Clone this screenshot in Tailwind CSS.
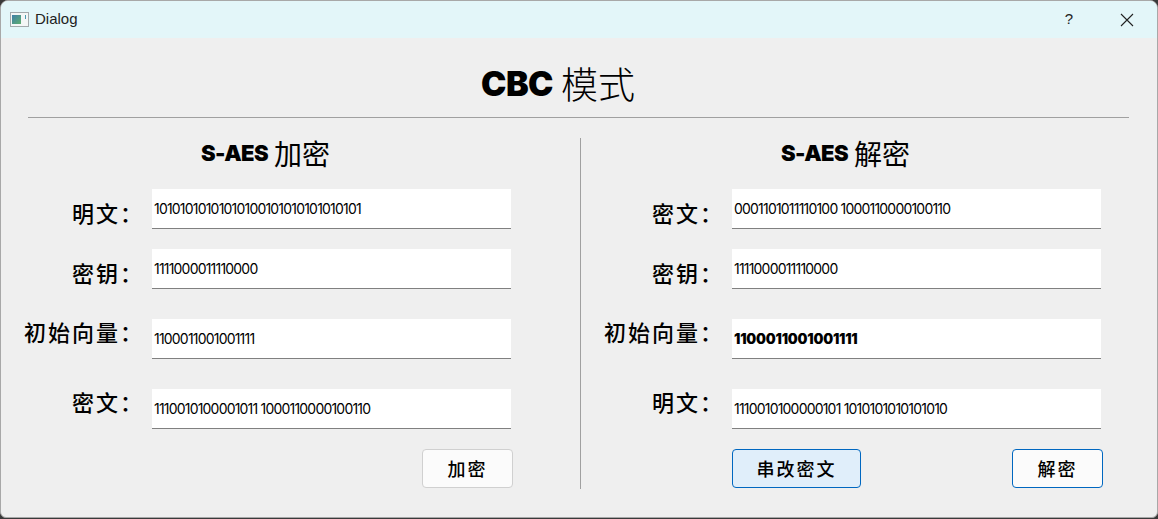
<!DOCTYPE html>
<html lang="en">
<head>
    <meta charset="UTF-8">
    <title>Dialog</title>
    <script src="https://cdn.jsdelivr.net/npm/@tailwindcss/browser@4"></script>
</head>
<body class="w-[1158px] h-[519px] overflow-hidden bg-[#3a3a3a] font-['Inter','Noto_Sans_CJK_SC',sans-serif] text-black">
    <div class="h-[518px] flex flex-col overflow-hidden rounded-t-[8px] rounded-b-[6px] border border-[#a8a8a8] bg-[#efefef]">
        <!-- Title bar -->
        <div class="h-[37px] shrink-0 flex items-center bg-[#e3f6f9] pl-[9px]">
            <svg width="19" height="15" viewBox="0 0 19 15" class="mr-[6px]">
                <defs>
                    <linearGradient id="iconFill" x1="0" y1="0" x2="1" y2="1">
                        <stop offset="0" stop-color="#3f7fa8"/>
                        <stop offset="1" stop-color="#5fae70"/>
                    </linearGradient>
                </defs>
                <rect x="0.5" y="0.5" width="18" height="14" fill="#f4f6f6" stroke="#a3a9ac"/>
                <rect x="2" y="3" width="9" height="9" fill="url(#iconFill)"/>
                <rect x="15" y="3" width="1" height="4" fill="#4a9bb0"/>
            </svg>
            <span class="font-['Liberation_Sans',sans-serif] text-[15px] text-[#222]">Dialog</span>
            <span class="ml-auto mr-[47px] font-['Liberation_Sans',sans-serif] text-[15px] text-[#222]">?</span>
            <svg width="14" height="14" viewBox="0 0 14 14" class="mr-[23px]" fill="none" stroke="#222" stroke-width="1.1">
                <path d="M1 1 L13 13 M13 1 L1 13"/>
            </svg>
        </div>

        <!-- Heading -->
        <div class="h-[80px] shrink-0 ml-[27px] w-[1101px] border-b border-[#a0a0a0] flex items-center justify-center pt-[12px] pr-[41px] gap-[8px] text-[34px] leading-none">
            <span class="font-black tracking-[-0.5px]">CBC</span><span class="font-['Noto_Sans_CJK_SC'] text-[37px] font-light">模式</span>
        </div>

        <div class="flex mt-[20px]">
            <!-- Encrypt -->
            <div class="w-[580px] h-[351px] shrink-0 border-r border-[#a0a0a0]">
                <div class="h-[30px] pl-[200px] flex items-center gap-[6px] leading-none">
                    <span class="font-black text-[22px] tracking-[-0.6px]">S-AES</span><span class="font-['Noto_Sans_CJK_SC'] text-[28px]">加密</span>
                </div>
                <div class="mt-[21px] flex flex-col">
                    <div class="h-[40px] flex items-center">
                        <span class="w-[143px] mt-[6px] text-right text-[22px] tracking-[2px] whitespace-nowrap font-['Noto_Sans_CJK_SC'] font-medium">明文：</span>
                        <div class="ml-[8px] w-[359px] h-[40px] flex items-center bg-white border-b border-[#808080] pl-[2px] text-[14px] tracking-[-0.8px]">10101010101010100101010101010101</div>
                    </div>
                    <div class="mt-[20px] h-[40px] flex items-center">
                        <span class="w-[143px] mt-[6px] text-right text-[22px] tracking-[2px] whitespace-nowrap font-['Noto_Sans_CJK_SC'] font-medium">密钥：</span>
                        <div class="ml-[8px] w-[359px] h-[40px] flex items-center bg-white border-b border-[#808080] pl-[2px] text-[14px] tracking-[-0.8px]">1111000011110000</div>
                    </div>
                    <div class="mt-[30px] h-[40px] flex items-center">
                        <span class="w-[143px] mb-[16px] text-right text-[22px] tracking-[2px] whitespace-nowrap font-['Noto_Sans_CJK_SC'] font-medium">初始向量：</span>
                        <div class="ml-[8px] w-[359px] h-[40px] flex items-center bg-white border-b border-[#808080] pl-[2px] text-[14px] tracking-[-0.8px]">1100011001001111</div>
                    </div>
                    <div class="mt-[30px] h-[40px] flex items-center">
                        <span class="w-[143px] mb-[16px] text-right text-[22px] tracking-[2px] whitespace-nowrap font-['Noto_Sans_CJK_SC'] font-medium">密文：</span>
                        <div class="ml-[8px] w-[359px] h-[40px] flex items-center bg-white border-b border-[#808080] pl-[2px] text-[14px] tracking-[-0.8px]">1110010100001011 1000110000100110</div>
                    </div>
                </div>
                <div class="mt-[20px] ml-[421px]">
                    <button class="w-[91px] h-[39px] rounded-[4px] border border-[#d0d0d0] bg-[#fbfbfb] text-[18px] font-['Noto_Sans_CJK_SC'] font-medium tracking-[2px]">加密</button>
                </div>
            </div>

            <!-- Decrypt -->
            <div class="w-[577px] h-[351px] shrink-0">
                <div class="h-[30px] pl-[200px] flex items-center gap-[6px] leading-none">
                    <span class="font-black text-[22px] tracking-[-0.6px]">S-AES</span><span class="font-['Noto_Sans_CJK_SC'] text-[28px]">解密</span>
                </div>
                <div class="mt-[21px] flex flex-col">
                    <div class="h-[40px] flex items-center">
                        <span class="w-[143px] mt-[6px] text-right text-[22px] tracking-[2px] whitespace-nowrap font-['Noto_Sans_CJK_SC'] font-medium">密文：</span>
                        <div class="ml-[8px] w-[369px] h-[40px] flex items-center bg-white border-b border-[#808080] pl-[2px] text-[14px] tracking-[-0.8px]">0001101011110100 1000110000100110</div>
                    </div>
                    <div class="mt-[20px] h-[40px] flex items-center">
                        <span class="w-[143px] mt-[6px] text-right text-[22px] tracking-[2px] whitespace-nowrap font-['Noto_Sans_CJK_SC'] font-medium">密钥：</span>
                        <div class="ml-[8px] w-[369px] h-[40px] flex items-center bg-white border-b border-[#808080] pl-[2px] text-[14px] tracking-[-0.8px]">1111000011110000</div>
                    </div>
                    <div class="mt-[30px] h-[40px] flex items-center">
                        <span class="w-[143px] mb-[16px] text-right text-[22px] tracking-[2px] whitespace-nowrap font-['Noto_Sans_CJK_SC'] font-medium">初始向量：</span>
                        <div class="ml-[8px] w-[369px] h-[40px] flex items-center bg-white border-b border-[#808080] pl-[2px] text-[14px] font-black tracking-[-0.2px]">1100011001001111</div>
                    </div>
                    <div class="mt-[30px] h-[40px] flex items-center">
                        <span class="w-[143px] mb-[16px] text-right text-[22px] tracking-[2px] whitespace-nowrap font-['Noto_Sans_CJK_SC'] font-medium">明文：</span>
                        <div class="ml-[8px] w-[369px] h-[40px] flex items-center bg-white border-b border-[#808080] pl-[2px] text-[14px] tracking-[-0.8px]">1110010100000101 1010101010101010</div>
                    </div>
                </div>
                <div class="mt-[20px] ml-[151px] w-[371px] flex justify-between">
                    <button class="w-[129px] h-[39px] rounded-[4px] border border-[#0067c0] bg-[#e0eefa] text-[18px] font-['Noto_Sans_CJK_SC'] font-medium tracking-[2px]">串改密文</button>
                    <button class="w-[91px] h-[39px] rounded-[4px] border border-[#0067c0] bg-[#fbfbfb] text-[18px] font-['Noto_Sans_CJK_SC'] font-medium tracking-[2px]">解密</button>
                </div>
            </div>
        </div>
    </div>
</body>
</html>
